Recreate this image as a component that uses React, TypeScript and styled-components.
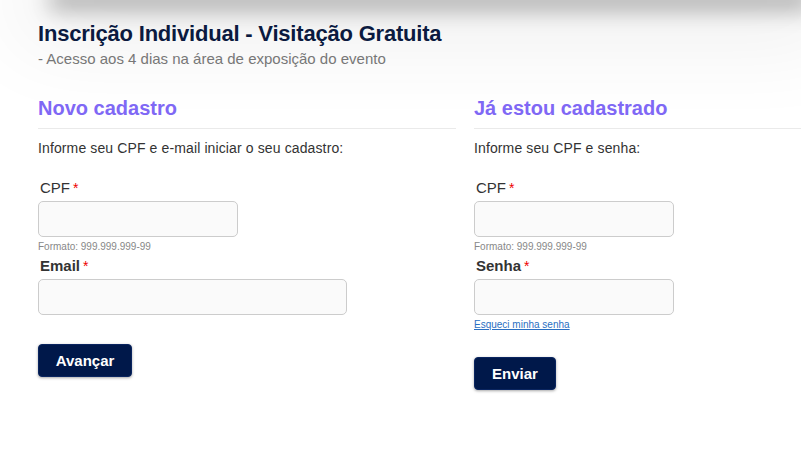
import React from "react";
import styled, { createGlobalStyle } from "styled-components";

const Global = createGlobalStyle`
  html, body { margin: 0; padding: 0; background: #fff; }
  body { font-family: "Liberation Sans", Arial, sans-serif; overflow: hidden; }
  * { box-sizing: border-box; }
`;

const Page = styled.div`
  width: 801px;
  height: 464px;
  overflow: hidden;
  background: #fff;
`;

const TopShade = styled.div`
  height: 0;
  margin-left: 60px;
  box-shadow: 0 0 22px 10px rgba(0, 0, 0, 0.3), 0 0 90px 40px rgba(0, 0, 0, 0.07);
`;

const Header = styled.header`
  padding: 21px 38px 0;
`;

const Title = styled.h1`
  margin: 0;
  font-size: 22px;
  line-height: 26px;
  letter-spacing: -0.2px;
  font-weight: 700;
  color: #0b1a40;
`;

const Subtitle = styled.p`
  margin: 3px 0 0;
  font-size: 15px;
  line-height: 18px;
  color: #777;
`;

const Columns = styled.div`
  display: grid;
  grid-template-columns: 418px 1fr;
  column-gap: 18px;
  padding-left: 38px;
  margin-top: 28px;
`;

const Column = styled.section`
  display: flex;
  flex-direction: column;
`;

const SectionTitle = styled.h2`
  margin: 0;
  font-size: 20px;
  line-height: 24px;
  font-weight: 700;
  color: #7f68f5;
  padding-bottom: 8px;
  border-bottom: 1px solid #eaeaea;
`;

const Intro = styled.p`
  margin: 10px 0 0;
  font-size: 14px;
  line-height: 18px;
  letter-spacing: 0.12px;
  color: #333;
`;

const Field = styled.div<{ $first?: boolean }>`
  display: flex;
  flex-direction: column;
  margin-top: ${(p) => (p.$first ? "22px" : "4px")};
`;

const Label = styled.label<{ $bold?: boolean }>`
  margin-left: 2px;
  font-size: 15px;
  line-height: 18px;
  color: #333;
  font-weight: ${(p) => (p.$bold ? 700 : 400)};
`;

const Req = styled.span`
  color: #e00;
  margin-left: 3px;
  font-size: 14px;
  font-weight: 400;
`;

const Input = styled.input<{ $w: number }>`
  width: ${(p) => p.$w}px;
  height: 36px;
  margin-top: 4px;
  border: 1px solid #ccc;
  border-radius: 5px;
  background: #fafafa;
  font-family: inherit;
  font-size: 14px;
  padding: 0 8px;
  outline: none;
`;

const Hint = styled.span`
  margin-top: 4px;
  font-size: 10px;
  line-height: 12px;
  color: #888;
`;

const Link = styled.a`
  margin-top: 4px;
  font-size: 10px;
  line-height: 12px;
  color: #2a6fc2;
  text-decoration: underline;
  cursor: pointer;
`;

const Button = styled.button<{ $w: number; $top: number }>`
  align-self: flex-start;
  width: ${(p) => p.$w}px;
  height: 33px;
  margin-top: ${(p) => p.$top}px;
  background: #00184a;
  color: #fff;
  border: 1px solid #0a2560;
  border-radius: 4px;
  font-family: inherit;
  font-size: 15px;
  font-weight: 700;
  box-shadow: 0 1px 3px rgba(0, 0, 0, 0.35);
  cursor: pointer;
`;

export default function App() {
  return (
    <Page>
      <Global />
      <TopShade />
      <Header>
        <Title>Inscrição Individual - Visitação Gratuita</Title>
        <Subtitle>- Acesso aos 4 dias na área de exposição do evento</Subtitle>
      </Header>
      <Columns>
        <Column>
          <SectionTitle>Novo cadastro</SectionTitle>
          <Intro>Informe seu CPF e e-mail iniciar o seu cadastro:</Intro>
          <Field $first>
            <Label>
              CPF<Req>*</Req>
            </Label>
            <Input $w={200} />
            <Hint>Formato: 999.999.999-99</Hint>
          </Field>
          <Field>
            <Label $bold>
              Email<Req>*</Req>
            </Label>
            <Input $w={309} />
          </Field>
          <Button $w={94} $top={29}>Avançar</Button>
        </Column>
        <Column>
          <SectionTitle>Já estou cadastrado</SectionTitle>
          <Intro>Informe seu CPF e senha:</Intro>
          <Field $first>
            <Label>
              CPF<Req>*</Req>
            </Label>
            <Input $w={200} />
            <Hint>Formato: 999.999.999-99</Hint>
          </Field>
          <Field>
            <Label $bold>
              Senha<Req>*</Req>
            </Label>
            <Input $w={200} type="password" />
            <Link>Esqueci minha senha</Link>
          </Field>
          <Button $w={82} $top={26}>Enviar</Button>
        </Column>
      </Columns>
    </Page>
  );
}
